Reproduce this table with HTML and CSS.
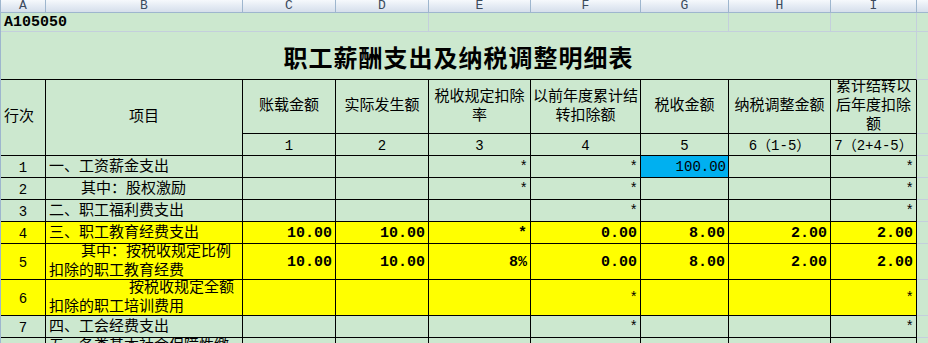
FILE: index.html
```html
<!DOCTYPE html>
<html lang="zh-CN">
<head>
<meta charset="utf-8">
<title>A105050 职工薪酬支出及纳税调整明细表</title>
<link rel="stylesheet" href="styles.css">
</head>
<body>
<div class="sheet">
  <!-- column header bar -->
  <div class="ch">A</div><div class="ch">B</div><div class="ch">C</div><div class="ch">D</div><div class="ch">E</div><div class="ch">F</div><div class="ch">G</div><div class="ch">H</div><div class="ch">I</div><div class="ch ch-end"></div>

  <!-- sheet row 1 -->
  <div class="g span3 code">A105050</div><div class="g"></div><div class="g span3"></div><div class="g"></div><div class="g"></div><div class="g gj"></div>

  <!-- sheet row 2: title -->
  <div class="g span9 title">职工薪酬支出及纳税调整明细表</div><div class="g gj"></div>

  <!-- header -->
  <div class="c rs2 hl">行次</div>
  <div class="c rs2 hc">项目</div>
  <div class="c hc">账载金额</div>
  <div class="c hc">实际发生额</div>
  <div class="c hc wrap">税收规定扣除率</div>
  <div class="c hc wrap">以前年度累计结转扣除额</div>
  <div class="c hc">税收金额</div>
  <div class="c hc">纳税调整金额</div>
  <div class="c hc wrap">累计结转以后年度扣除额</div>
  <div class="g gj"></div>
  <div class="c nc">1</div><div class="c nc">2</div><div class="c nc">3</div><div class="c nc">4</div><div class="c nc">5</div><div class="c nc">6（1-5）</div><div class="c nc">7（2+4-5）</div><div class="g gj"></div>

  <!-- row 1 -->
  <div class="c nc">1</div><div class="c tx">一、工资薪金支出</div><div class="c"></div><div class="c"></div><div class="c num"><span class="ast">*</span></div><div class="c num"><span class="ast">*</span></div><div class="c num blue">100.00</div><div class="c"></div><div class="c num"><span class="ast">*</span></div><div class="g gj"></div>
  <!-- row 2 -->
  <div class="c nc">2</div><div class="c tx in1">其中：股权激励</div><div class="c"></div><div class="c"></div><div class="c num"><span class="ast">*</span></div><div class="c num"><span class="ast">*</span></div><div class="c"></div><div class="c"></div><div class="c num"><span class="ast">*</span></div><div class="g gj"></div>
  <!-- row 3 -->
  <div class="c nc">3</div><div class="c tx">二、职工福利费支出</div><div class="c"></div><div class="c"></div><div class="c"></div><div class="c num"><span class="ast">*</span></div><div class="c"></div><div class="c"></div><div class="c num"><span class="ast">*</span></div><div class="g gj"></div>
  <!-- row 4 -->
  <div class="c nc y">4</div><div class="c tx y">三、职工教育经费支出</div><div class="c num b y">10.00</div><div class="c num b y">10.00</div><div class="c num b y"><span class="ast">*</span></div><div class="c num b y">0.00</div><div class="c num b y">8.00</div><div class="c num b y">2.00</div><div class="c num b y">2.00</div><div class="g gj"></div>
  <!-- row 5 -->
  <div class="c nc y">5</div><div class="c tx wrapl y in1t">其中：按税收规定比例扣除的职工教育经费</div><div class="c num b y">10.00</div><div class="c num b y">10.00</div><div class="c num b y">8%</div><div class="c num b y">0.00</div><div class="c num b y">8.00</div><div class="c num b y">2.00</div><div class="c num b y">2.00</div><div class="g gj"></div>
  <!-- row 6 -->
  <div class="c nc y">6</div><div class="c tx wrapl y in2t">按税收规定全额扣除的职工培训费用</div><div class="c y"></div><div class="c y"></div><div class="c y"></div><div class="c num y"><span class="ast">*</span></div><div class="c y"></div><div class="c y"></div><div class="c num y"><span class="ast">*</span></div><div class="g gj"></div>
  <!-- row 7 -->
  <div class="c nc">7</div><div class="c tx">四、工会经费支出</div><div class="c"></div><div class="c"></div><div class="c"></div><div class="c num"><span class="ast">*</span></div><div class="c"></div><div class="c"></div><div class="c num"><span class="ast">*</span></div><div class="g gj"></div>
  <!-- row 8 -->
  <div class="c nc">8</div><div class="c tx wrapl">五、各类基本社会保障性缴款</div><div class="c"></div><div class="c"></div><div class="c"></div><div class="c num"><span class="ast">*</span></div><div class="c"></div><div class="c"></div><div class="c num"><span class="ast">*</span></div><div class="g gj"></div>
</div>
</body>
</html>
```
FILE: styles.css
```css
* { box-sizing: border-box; margin: 0; padding: 0; }

html, body {
  width: 928px;
  height: 343px;
  overflow: hidden;
  background: #cce8cf;
}

body {
  font-family: "Liberation Mono", "Noto Sans CJK SC", monospace;
  color: #000;
}

.sheet {
  display: grid;
  grid-template-columns: 45px 197px 93px 93px 102px 110px 88px 102px 86px 1fr;
  grid-template-rows: 13px 19px 48px 54px 22px 22px 22px 22px 22px 36px 36px 22px 36px;
  border-left: 1px solid #9eb6ce;
  width: 928px;
}

/* column letter header bar */
.ch {
  background: linear-gradient(#f6f9fc, #e3eaf3 55%, #d6dfeb);
  border-right: 1px solid #9eb6ce;
  border-bottom: 1px solid #9eb6ce;
  color: #3b4a5c;
  font-family: "Liberation Mono", monospace;
  font-size: 13px;
  line-height: 12px;
  text-align: center;
}
.ch-end { border-right: none; }

/* gridline cells (no explicit borders) */
.g {
  border-right: 1px solid #c4cfdc;
  border-bottom: 1px solid #c4cfdc;
}
.gj { border-right: none; }
.span3 { grid-column: span 3; }
.span9 { grid-column: span 9; }

.code {
  font-weight: bold;
  font-size: 15px;
  display: flex;
  align-items: center;
  padding-left: 3px;
  border-right: none;
}

.title {
  border-bottom: 1px solid #000;
  display: flex;
  align-items: center;
  justify-content: center;
  font-family: "Noto Sans CJK SC", sans-serif;
  font-weight: 700;
  font-size: 24px;
  letter-spacing: 1px;
  padding-top: 1px;
}

/* bordered table cells */
.c {
  border-right: 1px solid #000;
  border-bottom: 1px solid #000;
  display: flex;
  align-items: center;
  overflow: hidden;
  white-space: nowrap;
  font-size: 15px;
  line-height: 19px;
  padding-top: 1px;
}

.rs2 { grid-row: span 2; }

.hl { padding-left: 3px; padding-top: 0; }
.hc {
  justify-content: center;
  text-align: center;
  padding: 0 1px;
}
.wrap { white-space: normal; }

.nc {
  justify-content: center;
  font-size: 14px;
  padding-top: 3px;
}

.tx { padding-left: 3px; }
.in1 { padding-left: 35px; }
.wrapl {
  white-space: normal;
  padding-right: 2px;
}
.in1t { text-indent: 32px; }
.in2t { text-indent: 80px; }

.num {
  justify-content: flex-end;
  padding-right: 2px;
  font-size: 14px;
  padding-top: 2px;
}
.b { font-weight: bold; font-size: 15px; padding-right: 3px; }

.ast {
  vertical-align: -4px;
}

.y { background: #ffff00; }
.blue { background: #00b0f0; }
```
